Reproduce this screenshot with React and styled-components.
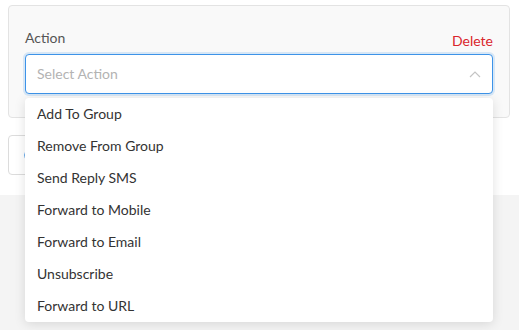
import React from 'react';
import styled, { createGlobalStyle } from 'styled-components';

const GlobalStyle = createGlobalStyle`
  html, body {
    margin: 0;
    padding: 0;
    background: #f4f4f4;
    font-family: Lato, "Open Sans", sans-serif;
  }
`;

const Page = styled.div`
  width: 519px;
  height: 330px;
  overflow: hidden;
  background: #f4f4f4;
`;

const Content = styled.section`
  background: #fff;
  height: 195px;
  padding: 5px 9px 0 8px;
  box-sizing: border-box;
`;

const Panel = styled.div`
  background: #f9f9f9;
  border: 1px solid #e3e3e3;
  border-radius: 4px;
  height: 113px;
  box-sizing: border-box;
  padding: 22px 16px 0 16px;
`;

const Header = styled.div`
  display: flex;
  justify-content: space-between;
  align-items: flex-start;
  height: 26px;
`;

const Label = styled.span`
  font-size: 14px;
  line-height: 20px;
  color: #555;
`;

const DeleteLink = styled.span`
  font-size: 14px;
  line-height: 20px;
  margin-top: 3px;
  color: #d9262c;
  cursor: pointer;
`;

const Field = styled.div`
  position: relative;
`;

const SelectBox = styled.div`
  height: 40px;
  box-sizing: border-box;
  border: 1px solid #3d93e8;
  border-radius: 4px;
  background: #fff;
  box-shadow: 0 0 0 2px rgba(61, 147, 232, 0.18);
  display: flex;
  align-items: center;
  justify-content: space-between;
  padding: 0 11px 1px 11px;
`;

const Placeholder = styled.span`
  font-size: 14px;
  color: #b3b3b3;
`;

const Menu = styled.ul`
  position: absolute;
  top: 44px;
  left: 0;
  right: 0;
  margin: 0;
  padding: 0;
  list-style: none;
  background: #fff;
  border-radius: 4px;
  box-shadow: 0 2px 12px rgba(0, 0, 0, 0.12);
  z-index: 10;
`;

const MenuItem = styled.li`
  height: 32px;
  line-height: 32px;
  padding: 0 12px;
  font-size: 14px;
  color: #333;
`;

const AddButton = styled.button`
  display: flex;
  align-items: center;
  margin-top: 17px;
  height: 40px;
  width: 160px;
  border: 1px solid #dcdcdc;
  border-radius: 4px;
  background: #fff;
  padding: 0 0 0 15px;
`;

const Chevron = () => (
  <svg width="12" height="8" viewBox="0 0 12 8" fill="none">
    <path d="M1 7L6 2L11 7" stroke="#c4c4c4" strokeWidth="1.2" />
  </svg>
);

const PlusCircle = () => (
  <svg width="14" height="14" viewBox="0 0 14 14" fill="none">
    <circle cx="7" cy="7" r="6.2" stroke="#3d93e8" strokeWidth="1.2" />
    <path d="M7 4V10M4 7H10" stroke="#3d93e8" strokeWidth="1.2" />
  </svg>
);

const options = [
  'Add To Group',
  'Remove From Group',
  'Send Reply SMS',
  'Forward to Mobile',
  'Forward to Email',
  'Unsubscribe',
  'Forward to URL',
];

export default function App() {
  return (
    <Page>
      <GlobalStyle />
      <Content>
        <Panel>
          <Header>
            <Label>Action</Label>
            <DeleteLink>Delete</DeleteLink>
          </Header>
          <Field>
            <SelectBox>
              <Placeholder>Select Action</Placeholder>
              <Chevron />
            </SelectBox>
            <Menu>
              {options.map((o) => (
                <MenuItem key={o}>{o}</MenuItem>
              ))}
            </Menu>
          </Field>
        </Panel>
        <AddButton aria-label="Add Action">
          <PlusCircle />
        </AddButton>
      </Content>
    </Page>
  );
}
